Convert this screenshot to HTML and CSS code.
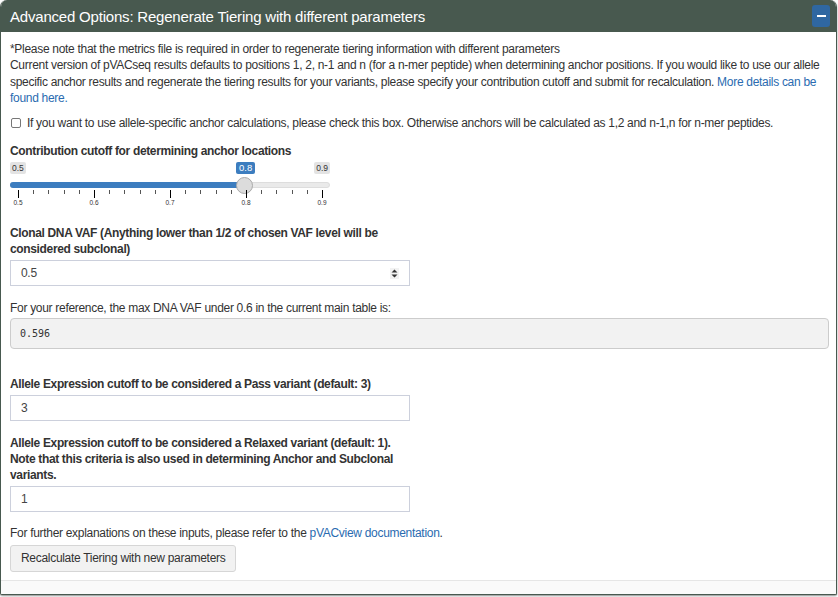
FILE: index.html
```html
<!DOCTYPE html>
<html>
<head>
<meta charset="utf-8">
<link rel="stylesheet" href="styles.css">
</head>
<body>
<div class="box">
  <div class="box-header">
    <h3 class="box-title">Advanced Options: Regenerate Tiering with different parameters</h3>
    <button class="btn-collapse" aria-label="collapse"><span class="minus"></span></button>
  </div>
  <div class="box-body">
    <p class="intro">*Please note that the metrics file is required in order to regenerate tiering information with different parameters<br>Current version of pVACseq results defaults to positions 1, 2, n-1 and n (for a n-mer peptide) when determining anchor positions. If you would like to use our allele specific anchor results and regenerate the tiering results for your variants, please specify your contribution cutoff and submit for recalculation. <a href="#">More details can be found here.</a></p>

    <label class="check"><span class="cb"></span>If you want to use allele-specific anchor calculations, please check this box. Otherwise anchors will be calculated as 1,2 and n-1,n for n-mer peptides.</label>

    <div class="group slider-group">
      <div class="label">Contribution cutoff for determining anchor locations</div>
      <div class="slider">
        <span class="tag tag-min">0.5</span>
        <span class="tag tag-val">0.8</span>
        <span class="tag tag-max">0.9</span>
        <div class="track"><div class="fill"></div></div>
        <div class="handle"></div>
        <div class="ticks">
          <span class="tk major" style="left:0%"></span>
          <span class="tk" style="left:5%"></span>
          <span class="tk" style="left:10%"></span>
          <span class="tk" style="left:15%"></span>
          <span class="tk" style="left:20%"></span>
          <span class="tk major" style="left:25%"></span>
          <span class="tk" style="left:30%"></span>
          <span class="tk" style="left:35%"></span>
          <span class="tk" style="left:40%"></span>
          <span class="tk" style="left:45%"></span>
          <span class="tk major" style="left:50%"></span>
          <span class="tk" style="left:55%"></span>
          <span class="tk" style="left:60%"></span>
          <span class="tk" style="left:65%"></span>
          <span class="tk" style="left:70%"></span>
          <span class="tk major" style="left:75%"></span>
          <span class="tk" style="left:80%"></span>
          <span class="tk" style="left:85%"></span>
          <span class="tk" style="left:90%"></span>
          <span class="tk" style="left:95%"></span>
          <span class="tk major" style="left:100%"></span>
          <span class="tl" style="left:0%">0.5</span>
          <span class="tl" style="left:25%">0.6</span>
          <span class="tl" style="left:50%">0.7</span>
          <span class="tl" style="left:75%">0.8</span>
          <span class="tl" style="left:100%">0.9</span>
        </div>
      </div>
    </div>

    <div class="group">
      <div class="label narrow">Clonal DNA VAF (Anything lower than 1/2 of chosen VAF level will be considered subclonal)</div>
      <div class="input">0.5
        <svg class="spin" width="9" height="11" viewBox="0 0 9 11"><path d="M4.5 1.5 L7.5 4.5 H1.5 Z M4.5 9.5 L7.5 6.5 H1.5 Z" fill="#333"/></svg>
      </div>
    </div>

    <p class="ref">For your reference, the max DNA VAF under 0.6 in the current main table is:</p>
    <pre class="verb">0.596</pre>

    <div class="group gap-top">
      <div class="label">Allele Expression cutoff to be considered a Pass variant (default: 3)</div>
      <div class="input">3</div>
    </div>

    <div class="group">
      <div class="label narrow">Allele Expression cutoff to be considered a Relaxed variant (default: 1). Note that this criteria is also used in determining Anchor and Subclonal variants.</div>
      <div class="input">1</div>
    </div>

    <p class="further">For further explanations on these inputs, please refer to the <a href="#">pVACview documentation</a>.</p>

    <button class="btn">Recalculate Tiering with new parameters</button>
  </div>
  <div class="box-footer"></div>
</div>
</body>
</html>
```

FILE: styles.css
```css
* { box-sizing: border-box; }
html, body { margin: 0; padding: 0; background: #fff; }
body {
  font-family: "Liberation Sans", Arial, sans-serif;
  font-size: 12px;
  letter-spacing: -0.3px;
  color: #333;
  width: 838px;
  height: 597px;
  overflow: hidden;
}
a { color: #2a6bb0; text-decoration: none; }

.box {
  width: 837px;
  border: 1px solid #48594f;
  border-top: 0;
  border-radius: 7px 7px 2px 2px;
  overflow: hidden;
  box-shadow: 0 1px 2px rgba(0,0,0,0.45);
  background: #fff;
}
.box-header {
  height: 32px;
  background: #48594f;
  display: flex;
  align-items: center;
  justify-content: space-between;
  padding: 0 6px 0 9px;
}
.box-title {
  margin: 0;
  font-size: 15px;
  font-weight: normal;
  color: #fff;
  letter-spacing: -0.2px;
}
.btn-collapse {
  width: 18px;
  height: 22px;
  border: 0;
  border-radius: 3px;
  background: #2f67a1;
  padding: 0;
  display: flex;
  align-items: center;
  justify-content: center;
}
.minus { width: 9px; height: 2px; background: #fff; display: block; }

.box-body { padding: 9px 9px 8px 9px; }
.intro { margin: 0 0 8px; line-height: 16.4px; }

.check {
  display: flex;
  align-items: center;
  gap: 6px;
  line-height: 16px;
  margin-bottom: 12px;
}
.cb {
  width: 10px; height: 10px;
  border: 1px solid #777;
  border-radius: 2px;
  background: #fff;
  margin-left: 1px;
}

.group { margin-bottom: 14px; }
.label { font-weight: bold; line-height: 16px; margin-bottom: 3px; letter-spacing: -0.35px; }
.narrow { width: 395px; }
.gap-top { margin-top: 27px; }

.slider-group { margin-bottom: 17px; }
.slider {
  position: relative;
  width: 320px;
  height: 46px;
  margin-top: 0;
  letter-spacing: 0;
}
.tag {
  position: absolute;
  top: 0;
  font-size: 8.5px;
  line-height: 12px;
  padding: 0 2px;
  border-radius: 2px;
  background: #e3e3e3;
  color: #333;
}
.tag-min { left: 0; }
.tag-max { right: 0; }
.tag-val { left: 226px; background: #3c7dbf; color: #fff; font-size: 9.5px; padding: 0 3px; }
.track {
  position: absolute;
  left: 0; right: 0;
  top: 20px;
  height: 6px;
  border-radius: 3px;
  background: #eaeaea;
  border: 1px solid #ddd;
}
.fill {
  position: absolute;
  left: -1px; top: -1px; bottom: -1px;
  width: 236px;
  border-radius: 3px 0 0 3px;
  background: #3c7dbf;
}
.handle {
  position: absolute;
  left: 226px;
  top: 15px;
  width: 17px;
  height: 17px;
  border-radius: 50%;
  background: #dcdcdc;
  border: 1px solid #aaa;
}
.ticks {
  position: absolute;
  left: 8px;
  right: 8px;
  top: 28px;
  height: 18px;
}
.tk {
  position: absolute;
  top: 0;
  width: 1px;
  height: 4px;
  background: #555;
}
.tk.major { height: 8px; background: #000; }
.tl {
  position: absolute;
  top: 9px;
  transform: translateX(-50%);
  font-size: 6.5px;
  color: #333;
}

.input {
  position: relative;
  width: 400px;
  height: 26px;
  border: 1px solid #ccd0dc;
  padding: 0 10px;
  display: flex;
  align-items: center;
  font-size: 12px;
  color: #444;
  background: #fff;
}
.spin {
  position: absolute;
  right: 10px;
  top: 7px;
  background: #f2f2f2;
}

.ref { margin: 1px 0 2px; line-height: 16px; }
.verb {
  margin: 0;
  height: 31px;
  width: 819px;
  border: 1px solid #ccc;
  border-radius: 4px;
  background: #f2f2f2;
  font-family: "DejaVu Sans Mono", monospace;
  font-size: 10px;
  letter-spacing: 0;
  padding: 0 9px;
  display: flex;
  align-items: center;
  color: #333;
}

.further { margin: -1px 0 4px; line-height: 16px; }
.btn {
  font-family: inherit;
  font-size: 12px;
  letter-spacing: -0.3px;
  color: #333;
  background: #f2f2f2;
  border: 1px solid #d6d6d6;
  border-radius: 3px;
  height: 27px;
  padding: 0 10px;
}

.box-footer {
  height: 14px;
  border-top: 1px solid #e6e6e6;
  background: #fafafa;
}
```
